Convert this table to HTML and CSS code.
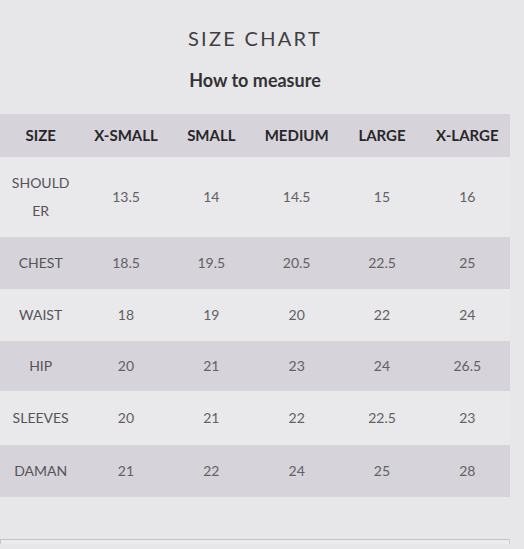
FILE: index.html
```html
<!DOCTYPE html>
<html>
<head>
<meta charset="utf-8">
<link rel="stylesheet" href="styles.css">
</head>
<body>
<div class="page">
  <h1 class="title">SIZE CHART</h1>
  <h2 class="subtitle">How to measure</h2>
  <div class="chart">
    <div class="row head">
      <div>SIZE</div><div>X-SMALL</div><div>SMALL</div><div>MEDIUM</div><div>LARGE</div><div>X-LARGE</div>
    </div>
    <div class="row">
      <div class="label">SHOULDER</div><div>13.5</div><div>14</div><div>14.5</div><div>15</div><div>16</div>
    </div>
    <div class="row alt">
      <div class="label">CHEST</div><div>18.5</div><div>19.5</div><div>20.5</div><div>22.5</div><div>25</div>
    </div>
    <div class="row">
      <div class="label">WAIST</div><div>18</div><div>19</div><div>20</div><div>22</div><div>24</div>
    </div>
    <div class="row alt short">
      <div class="label">HIP</div><div>20</div><div>21</div><div>23</div><div>24</div><div>26.5</div>
    </div>
    <div class="row tall">
      <div class="label">SLEEVES</div><div>20</div><div>21</div><div>22</div><div>22.5</div><div>23</div>
    </div>
    <div class="row alt">
      <div class="label">DAMAN</div><div>21</div><div>22</div><div>24</div><div>25</div><div>28</div>
    </div>
  </div>
  <div class="box"></div>
</div>
</body>
</html>
```

FILE: styles.css
```css
html, body {
  margin: 0;
  padding: 0;
  background: #e7e6e8;
}
body {
  font-family: Lato, "Open Sans", sans-serif;
  overflow: hidden;
}
.page {
  width: 510px;
  padding-top: 26px;
}
.title {
  margin: 0;
  text-align: center;
  font-size: 20px;
  line-height: 24px;
  font-weight: 400;
  letter-spacing: 2.3px;
  color: #404042;
}
.subtitle {
  margin: 20px 0 0;
  text-align: center;
  font-size: 18px;
  line-height: 20px;
  font-weight: 700;
  color: #333335;
}
.chart {
  margin: 24px 0 0 -2px;
  width: 512px;
}
.row {
  display: grid;
  grid-template-columns: repeat(6, 1fr);
  align-items: center;
  padding: 12px 0;
  background: #e9e8ea;
  font-size: 14px;
  line-height: 28px;
  color: #626164;
  text-align: center;
}
.row.alt {
  background: #d7d3da;
}
.row.short {
  padding: 11px 0;
}
.row.tall {
  padding: 13px 0;
}
.row.head {
  background: #d7d3da;
  font-size: 15px;
  line-height: 19px;
  font-weight: 700;
  color: #28272a;
}
.label {
  padding: 0 11px;
  word-break: break-all;
  color: #555457;
}
.box {
  margin-top: 42px;
  height: 4px;
  border: 1px solid #c4c4c6;
  border-bottom: 0;
  border-right-color: #cfcfd1;
  background: #ebeaec;
}
```
